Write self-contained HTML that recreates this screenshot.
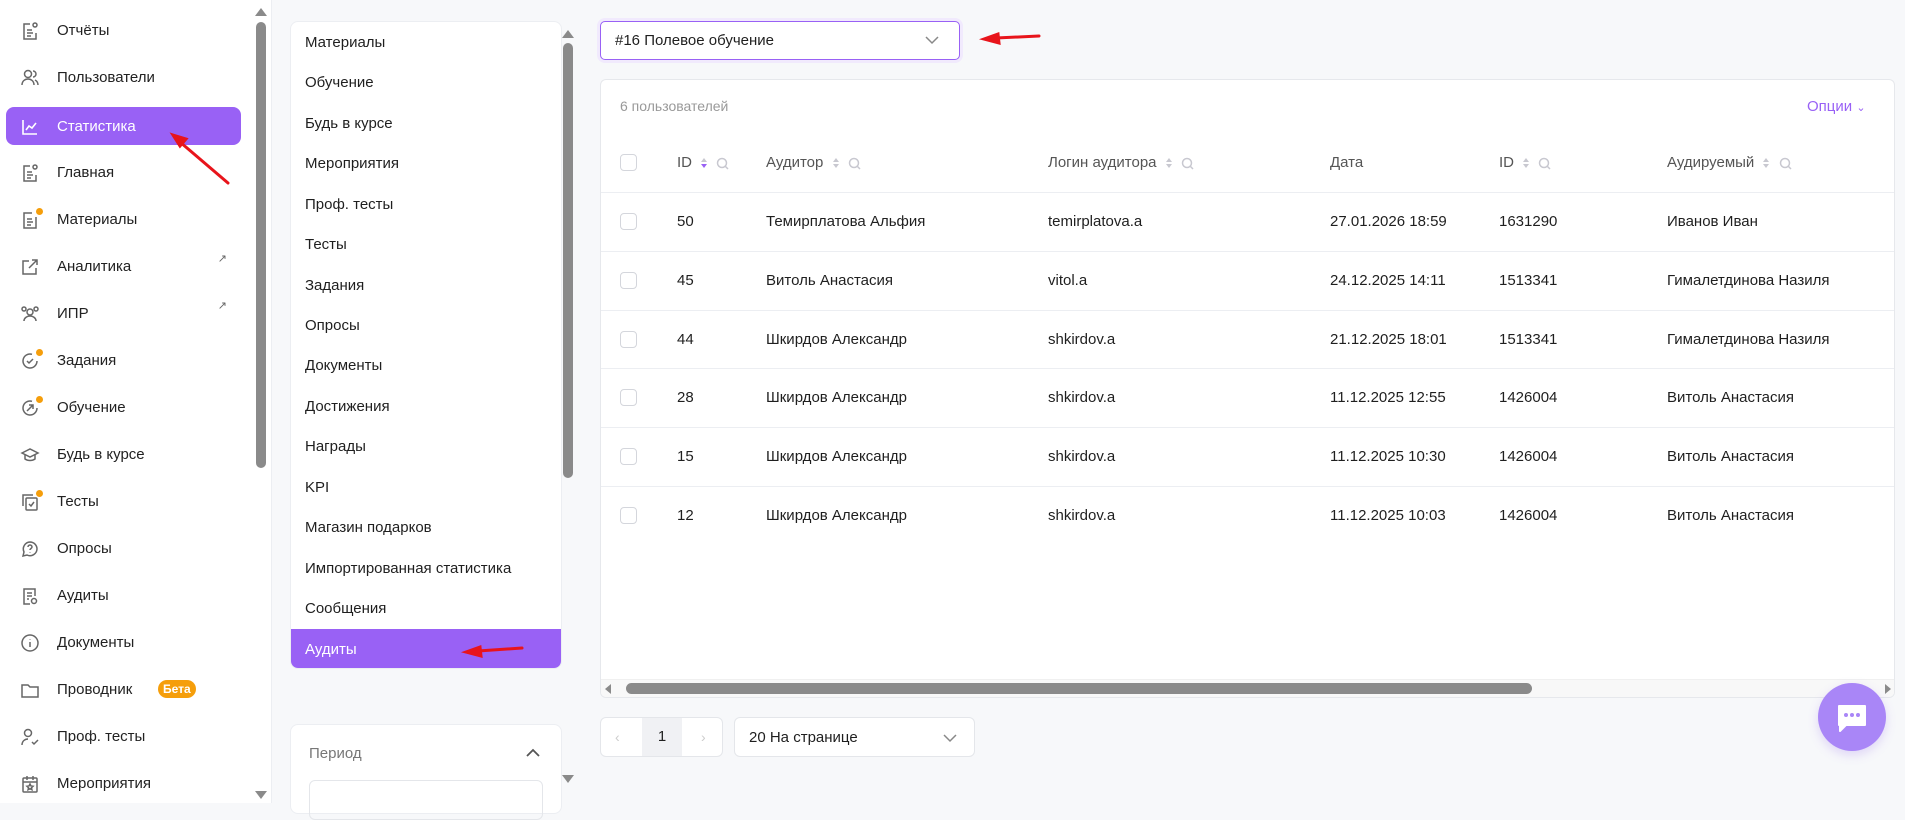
<!DOCTYPE html>
<html><head><meta charset="utf-8"><style>
*{box-sizing:border-box;margin:0;padding:0}
body{width:1905px;height:803px;overflow:hidden;background:#f7f8fa;font-family:"Liberation Sans",sans-serif;color:#1f1f1f;position:relative}
.abs{position:absolute}
#side{left:0;top:0;width:272px;height:803px;background:#fff;border-right:1px solid #eceef2}
.si{position:absolute;left:6px;width:235px;height:38px;display:flex;align-items:center;font-size:15px;color:#222}
.si svg{position:absolute;left:14px;top:10px}
.si span{position:absolute;left:51px}
.si.act{background:#9961f5;border-radius:8px;color:#fff}
.ext{position:absolute;right:14px;top:5px;font-size:11px;color:#666}
.dot{position:absolute;width:7px;height:7px;border-radius:50%;background:#f59e0b}
.sb{background:#8a8a8a;border-radius:5px;width:10px}
.tri-up{width:0;height:0;border-left:6px solid transparent;border-right:6px solid transparent;border-bottom:8px solid #8a8a8a}
.tri-dn{width:0;height:0;border-left:6px solid transparent;border-right:6px solid transparent;border-top:8px solid #8a8a8a}
#mid{left:290px;top:21px;width:272px;height:648px;background:#fff;border:1px solid #eceef2;border-radius:8px;overflow:hidden}
.mi{position:absolute;left:0;width:272px;height:40px;font-size:15px;padding-left:14px;display:flex;align-items:center}
.mi.act{background:#9961f5;color:#fff}
#tbl{left:600px;top:79px;width:1295px;height:619px;background:#fff;border:1px solid #e6e8ec;border-radius:6px;overflow:hidden}
.row{position:absolute;left:0;width:1295px;border-top:1px solid #eceef2}
.c{position:absolute;font-size:15px;white-space:nowrap}
.cb{position:absolute;left:19px;width:17px;height:17px;border:1px solid #d4d6dc;border-radius:4px;background:#fff}
.h{color:#555;font-size:15px}
.srt{display:inline-block;vertical-align:middle;margin-left:4px}
</style></head><body>

<div id="side" class="abs">
  <div class="si" style="top:11px"><svg width="20" height="20" viewBox="0 0 20 20" fill="none" stroke="#666" stroke-width="1.5"><path d="M10 3H4v15h12v-6"/><path d="M7 9h5M7 12h6M7 15h4"/><circle cx="15" cy="4" r="2"/></svg><span>Отчёты</span></div>
  <div class="si" style="top:58px"><svg width="20" height="20" viewBox="0 0 20 20" fill="none" stroke="#666" stroke-width="1.5"><circle cx="8" cy="6" r="3.5"/><path d="M2 17c0-4 3-6 6-6s6 2 6 6"/><path d="M13 3a3 3 0 010 6M15 12c2 1 3 3 3 5"/></svg><span>Пользователи</span></div>
  <div class="si act" style="top:107px"><svg width="20" height="20" viewBox="0 0 20 20" fill="none" stroke="#fff" stroke-width="1.6"><path d="M3 3v14h14"/><path d="M6 13l3-4 3 2 4-5"/></svg><span>Статистика</span></div>
  <div class="si" style="top:153px"><svg width="20" height="20" viewBox="0 0 20 20" fill="none" stroke="#666" stroke-width="1.5"><path d="M10 3H4v15h12v-6"/><path d="M7 9h5M7 12h6M7 15h4"/><circle cx="15" cy="4" r="2"/></svg><span>Главная</span></div>
  <div class="si" style="top:200px"><svg width="20" height="20" viewBox="0 0 20 20" fill="none" stroke="#666" stroke-width="1.5"><path d="M12 3H4v15h12V7"/><path d="M7 9h5M7 12h6M7 15h4"/></svg><div class="dot" style="left:30px;top:8px"></div><span>Материалы</span></div>
  <div class="si" style="top:247px"><svg width="20" height="20" viewBox="0 0 20 20" fill="none" stroke="#666" stroke-width="1.5"><path d="M9 4H3v13h13v-6"/><path d="M12 3h5v5M17 3l-8 8"/></svg><span>Аналитика</span><div class="ext">↗</div></div>
  <div class="si" style="top:294px"><svg width="20" height="20" viewBox="0 0 20 20" fill="none" stroke="#666" stroke-width="1.5"><circle cx="10" cy="8" r="3"/><path d="M4 17c0-3 3-5 6-5s6 2 6 5"/><circle cx="4" cy="5" r="2"/><circle cx="16" cy="5" r="2"/></svg><span>ИПР</span><div class="ext">↗</div></div>
  <div class="si" style="top:341px"><svg width="20" height="20" viewBox="0 0 20 20" fill="none" stroke="#666" stroke-width="1.5"><path d="M17 10a7 7 0 11-5-6.7"/><path d="M7 10l2 2 4-4"/></svg><div class="dot" style="left:30px;top:8px"></div><span>Задания</span></div>
  <div class="si" style="top:388px"><svg width="20" height="20" viewBox="0 0 20 20" fill="none" stroke="#666" stroke-width="1.5"><path d="M17 10a7 7 0 11-5-6.7"/><path d="M7 13l6-6M9 7h4v4"/></svg><div class="dot" style="left:30px;top:8px"></div><span>Обучение</span></div>
  <div class="si" style="top:435px"><svg width="20" height="20" viewBox="0 0 20 20" fill="none" stroke="#666" stroke-width="1.5"><path d="M2 8l8-4 8 4-8 4z"/><path d="M5 10v4c3 2 7 2 10 0v-4"/></svg><span>Будь в курсе</span></div>
  <div class="si" style="top:482px"><svg width="20" height="20" viewBox="0 0 20 20" fill="none" stroke="#666" stroke-width="1.5"><path d="M3 14V3h10"/><rect x="6" y="6" width="11" height="12" rx="1"/><path d="M9 12l2 2 3-4"/></svg><div class="dot" style="left:30px;top:8px"></div><span>Тесты</span></div>
  <div class="si" style="top:529px"><svg width="20" height="20" viewBox="0 0 20 20" fill="none" stroke="#666" stroke-width="1.5"><path d="M10 3a7 7 0 017 7 7 7 0 01-10 6l-4 1 1-4a7 7 0 016-10z"/><path d="M8 8a2 2 0 114 0c0 1.5-2 1.5-2 3M10 13.5v.5"/></svg><span>Опросы</span></div>
  <div class="si" style="top:576px"><svg width="20" height="20" viewBox="0 0 20 20" fill="none" stroke="#666" stroke-width="1.5"><path d="M10 18H4V3h11v7"/><path d="M7 7h5M7 10h5M7 13h2"/><circle cx="14" cy="15" r="2.5"/></svg><span>Аудиты</span></div>
  <div class="si" style="top:623px"><svg width="20" height="20" viewBox="0 0 20 20" fill="none" stroke="#666" stroke-width="1.5"><circle cx="10" cy="10" r="8"/><path d="M10 9v5M10 6v.5"/></svg><span>Документы</span></div>
  <div class="si" style="top:670px"><svg width="20" height="20" viewBox="0 0 20 20" fill="none" stroke="#666" stroke-width="1.5"><path d="M2 5h6l2 2h8v10H2z"/></svg><span>Проводник</span><div style="position:absolute;left:152px;top:10px;background:#f59e0b;color:#fff;font-size:12px;font-weight:bold;padding:2px 5px;border-radius:9px">Бета</div></div>
  <div class="si" style="top:717px"><svg width="20" height="20" viewBox="0 0 20 20" fill="none" stroke="#666" stroke-width="1.5"><circle cx="8" cy="6" r="3.5"/><path d="M2 18c0-4 3-6 6-6"/><path d="M12 15l2 2 4-4"/></svg><span>Проф. тесты</span></div>
  <div class="si" style="top:764px"><svg width="20" height="20" viewBox="0 0 20 20" fill="none" stroke="#666" stroke-width="1.5"><rect x="3" y="4" width="14" height="14" rx="1"/><path d="M3 8h14M7 2v4M13 2v4"/><path d="M10 10l1 2 2 .3-1.5 1.4.4 2-1.9-1-1.9 1 .4-2L7 12.3 9 12z"/></svg><span>Мероприятия</span></div>
  <div class="abs tri-up" style="left:255px;top:8px"></div>
  <div class="abs sb" style="left:256px;top:22px;height:446px"></div>
  <div class="abs tri-dn" style="left:255px;top:791px"></div>
</div>

<div id="mid" class="abs">
  <div class="mi" style="top:0">Материалы</div>
  <div class="mi" style="top:40px">Обучение</div>
  <div class="mi" style="top:81px">Будь в курсе</div>
  <div class="mi" style="top:121px">Мероприятия</div>
  <div class="mi" style="top:162px">Проф. тесты</div>
  <div class="mi" style="top:202px">Тесты</div>
  <div class="mi" style="top:243px">Задания</div>
  <div class="mi" style="top:283px">Опросы</div>
  <div class="mi" style="top:323px">Документы</div>
  <div class="mi" style="top:364px">Достижения</div>
  <div class="mi" style="top:404px">Награды</div>
  <div class="mi" style="top:445px">KPI</div>
  <div class="mi" style="top:485px">Магазин подарков</div>
  <div class="mi" style="top:526px">Импортированная статистика</div>
  <div class="mi" style="top:566px">Сообщения</div>
  <div class="mi act" style="top:607px;height:41px">Аудиты</div>
</div>
<div class="abs tri-up" style="left:562px;top:30px"></div>
<div class="abs sb" style="left:563px;top:43px;height:435px"></div>
<div class="abs tri-dn" style="left:562px;top:775px"></div>

<div class="abs" style="left:290px;top:724px;width:272px;height:90px;background:#fff;border:1px solid #eceef2;border-radius:8px">
  <div class="abs" style="left:18px;top:20px;font-size:15px;color:#777">Период</div>
  <svg class="abs" style="left:234px;top:22px" width="16" height="12" viewBox="0 0 16 12" fill="none" stroke="#555" stroke-width="1.8"><path d="M2 9l6-6 6 6"/></svg>
  <div class="abs" style="left:18px;top:55px;width:234px;height:40px;border:1px solid #e4e6ea;border-radius:6px"></div>
</div>

<div class="abs" style="left:600px;top:21px;width:360px;height:39px;background:#fff;border:1.5px solid #9961f5;border-radius:5px;box-shadow:0 0 0 3px #f1eafd">
  <div class="abs" style="left:14px;top:10px;font-size:15px">#16 Полевое обучение</div>
  <svg class="abs" style="left:324px;top:14px" width="14" height="9" viewBox="0 0 14 9" fill="none" stroke="#888" stroke-width="1.5"><path d="M1 1l6 6 6-6"/></svg>
</div>

<div id="tbl" class="abs">
  <div class="c" style="left:19px;top:18px;color:#999;font-size:14px">6 пользователей</div>
  <div class="c" style="left:1206px;top:18px;color:#9961f5;font-size:15px">Опции <span style="font-size:11px">&#8964;</span></div>
  <div class="cb" style="top:74px"></div>
  <div class="c h" style="left:76px;top:74px">ID <svg class="srt" width="8" height="12" viewBox="0 0 8 12"><path d="M4 1l3 4H1z" fill="#c8c8d0"/><path d="M4 11l3-4H1z" fill="#9961f5"/></svg> <svg class="srt" width="13" height="13" viewBox="0 0 13 13" fill="none" stroke="#c8c8d0" stroke-width="1.5"><circle cx="6" cy="6" r="4.5"/><path d="M9.5 9.5l2.5 2.5"/></svg></div>
  <div class="c h" style="left:165px;top:74px">Аудитор <svg class="srt" width="8" height="12" viewBox="0 0 8 12"><path d="M4 1l3 4H1z" fill="#c8c8d0"/><path d="M4 11l3-4H1z" fill="#c8c8d0"/></svg> <svg class="srt" width="13" height="13" viewBox="0 0 13 13" fill="none" stroke="#c8c8d0" stroke-width="1.5"><circle cx="6" cy="6" r="4.5"/><path d="M9.5 9.5l2.5 2.5"/></svg></div>
  <div class="c h" style="left:447px;top:74px">Логин аудитора <svg class="srt" width="8" height="12" viewBox="0 0 8 12"><path d="M4 1l3 4H1z" fill="#c8c8d0"/><path d="M4 11l3-4H1z" fill="#c8c8d0"/></svg> <svg class="srt" width="13" height="13" viewBox="0 0 13 13" fill="none" stroke="#c8c8d0" stroke-width="1.5"><circle cx="6" cy="6" r="4.5"/><path d="M9.5 9.5l2.5 2.5"/></svg></div>
  <div class="c h" style="left:729px;top:74px">Дата</div>
  <div class="c h" style="left:898px;top:74px">ID <svg class="srt" width="8" height="12" viewBox="0 0 8 12"><path d="M4 1l3 4H1z" fill="#c8c8d0"/><path d="M4 11l3-4H1z" fill="#c8c8d0"/></svg> <svg class="srt" width="13" height="13" viewBox="0 0 13 13" fill="none" stroke="#c8c8d0" stroke-width="1.5"><circle cx="6" cy="6" r="4.5"/><path d="M9.5 9.5l2.5 2.5"/></svg></div>
  <div class="c h" style="left:1066px;top:74px">Аудируемый <svg class="srt" width="8" height="12" viewBox="0 0 8 12"><path d="M4 1l3 4H1z" fill="#c8c8d0"/><path d="M4 11l3-4H1z" fill="#c8c8d0"/></svg> <svg class="srt" width="13" height="13" viewBox="0 0 13 13" fill="none" stroke="#c8c8d0" stroke-width="1.5"><circle cx="6" cy="6" r="4.5"/><path d="M9.5 9.5l2.5 2.5"/></svg></div>

  <div class="row" style="top:112px;height:59px"><div class="cb" style="top:20px"></div><div class="c" style="left:76px;top:20px">50</div><div class="c" style="left:165px;top:20px">Темирплатова Альфия</div><div class="c" style="left:447px;top:20px">temirplatova.a</div><div class="c" style="left:729px;top:20px">27.01.2026 18:59</div><div class="c" style="left:898px;top:20px">1631290</div><div class="c" style="left:1066px;top:20px">Иванов Иван</div></div>
  <div class="row" style="top:171px;height:59px"><div class="cb" style="top:20px"></div><div class="c" style="left:76px;top:20px">45</div><div class="c" style="left:165px;top:20px">Витоль Анастасия</div><div class="c" style="left:447px;top:20px">vitol.a</div><div class="c" style="left:729px;top:20px">24.12.2025 14:11</div><div class="c" style="left:898px;top:20px">1513341</div><div class="c" style="left:1066px;top:20px">Гималетдинова Назиля</div></div>
  <div class="row" style="top:230px;height:59px"><div class="cb" style="top:20px"></div><div class="c" style="left:76px;top:20px">44</div><div class="c" style="left:165px;top:20px">Шкирдов Александр</div><div class="c" style="left:447px;top:20px">shkirdov.a</div><div class="c" style="left:729px;top:20px">21.12.2025 18:01</div><div class="c" style="left:898px;top:20px">1513341</div><div class="c" style="left:1066px;top:20px">Гималетдинова Назиля</div></div>
  <div class="row" style="top:288px;height:59px"><div class="cb" style="top:20px"></div><div class="c" style="left:76px;top:20px">28</div><div class="c" style="left:165px;top:20px">Шкирдов Александр</div><div class="c" style="left:447px;top:20px">shkirdov.a</div><div class="c" style="left:729px;top:20px">11.12.2025 12:55</div><div class="c" style="left:898px;top:20px">1426004</div><div class="c" style="left:1066px;top:20px">Витоль Анастасия</div></div>
  <div class="row" style="top:347px;height:59px"><div class="cb" style="top:20px"></div><div class="c" style="left:76px;top:20px">15</div><div class="c" style="left:165px;top:20px">Шкирдов Александр</div><div class="c" style="left:447px;top:20px">shkirdov.a</div><div class="c" style="left:729px;top:20px">11.12.2025 10:30</div><div class="c" style="left:898px;top:20px">1426004</div><div class="c" style="left:1066px;top:20px">Витоль Анастасия</div></div>
  <div class="row" style="top:406px;height:59px"><div class="cb" style="top:20px"></div><div class="c" style="left:76px;top:20px">12</div><div class="c" style="left:165px;top:20px">Шкирдов Александр</div><div class="c" style="left:447px;top:20px">shkirdov.a</div><div class="c" style="left:729px;top:20px">11.12.2025 10:03</div><div class="c" style="left:898px;top:20px">1426004</div><div class="c" style="left:1066px;top:20px">Витоль Анастасия</div></div>

  <div class="abs" style="left:0;top:599px;width:1295px;height:19px;background:#f8f8f8;border-top:1px solid #f0f0f0"></div>
  <div class="abs" style="left:4px;top:604px;width:0;height:0;border-top:5px solid transparent;border-bottom:5px solid transparent;border-right:6px solid #8a8a8a"></div>
  <div class="abs" style="left:25px;top:603px;width:906px;height:11px;background:#8a8a8a;border-radius:6px"></div>
  <div class="abs" style="left:1284px;top:604px;width:0;height:0;border-top:5px solid transparent;border-bottom:5px solid transparent;border-left:6px solid #8a8a8a"></div>
</div>

<div class="abs" style="left:600px;top:717px;width:123px;height:40px;background:#fff;border:1px solid #e4e6ea;border-radius:6px;overflow:hidden">
  <div class="abs" style="left:14px;top:11px;color:#ccc;font-size:14px">‹</div>
  <div class="abs" style="left:41px;top:0;width:40px;height:40px;background:#f0f1f4;font-size:15px;text-align:center;line-height:38px">1</div>
  <div class="abs" style="left:100px;top:11px;color:#ccc;font-size:14px">›</div>
</div>
<div class="abs" style="left:734px;top:717px;width:241px;height:40px;background:#fff;border:1px solid #e4e6ea;border-radius:6px">
  <div class="abs" style="left:14px;top:11px;font-size:15px">20 На странице</div>
  <svg class="abs" style="left:208px;top:16px" width="14" height="9" viewBox="0 0 14 9" fill="none" stroke="#888" stroke-width="1.5"><path d="M1 1l6 6 6-6"/></svg>
</div>

<div class="abs" style="left:1818px;top:683px;width:68px;height:68px;border-radius:50%;background:#a986f7;box-shadow:0 4px 10px rgba(150,110,240,.25)">
  <svg class="abs" style="left:17px;top:19px" width="34" height="34" viewBox="0 0 34 34"><path d="M4 4h26v19H11l-6 6v-6H4z" fill="#fff" stroke="#fff" stroke-linejoin="round" stroke-width="2"/><circle cx="11" cy="13" r="2" fill="#a986f7"/><circle cx="17" cy="13" r="2" fill="#a986f7"/><circle cx="23" cy="13" r="2" fill="#a986f7"/></svg>
</div>

<svg class="abs" style="left:0;top:0" width="1905" height="803" viewBox="0 0 1905 803">
  <g stroke="#e8141b" stroke-width="3" fill="#e8141b" stroke-linecap="round">
    <path d="M228 183L180 142"/><path d="M173 135l13 4-6 7z"/>
    <path d="M522 648L478 651"/><path d="M466 652l14-5 1 9z"/>
    <path d="M1039 36L996 38"/><path d="M984 39l14-5 1 9z"/>
  </g>
</svg>
</body></html>
